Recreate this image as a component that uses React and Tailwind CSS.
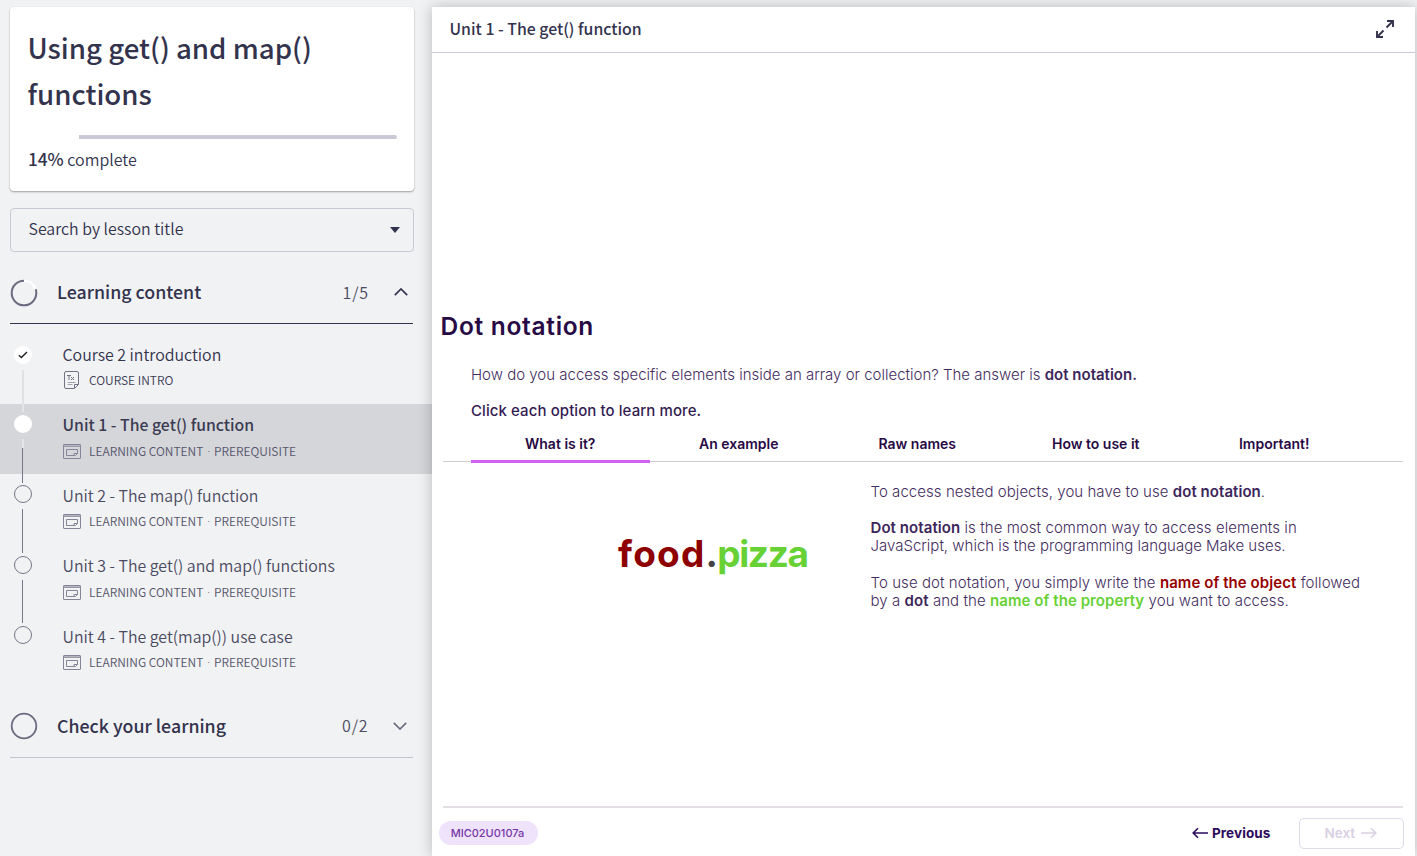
import React from "react";

function Dot() {
  return <span className="mx-[3.8px] font-['Roboto',sans-serif]">·</span>;
}

function ContentIcon() {
  return (
    <svg width="18" height="15" viewBox="0 0 18 15" fill="none" stroke="#85859a" className="shrink-0">
      <rect x="0.5" y="0.5" width="17" height="14" rx="0.5" />
      <path d="M1 1.5H17" stroke="#b4b4c0" />
      <path d="M0.5 2.5H17.5" stroke="#9a9aaa" />
      <path d="M11.5 11.5H3.5V5.5H14.5V9.5L12.5 11.5H11V9.5H14.5" />
    </svg>
  );
}

function TextIcon() {
  return (
    <svg width="18" height="18" viewBox="0 0 18 18" fill="none" stroke="#737385" className="shrink-0">
      <path d="M3 0.5H14Q15.5 0.5 15.5 2V13.5L11.5 17.5H3Q1.5 17.5 1.5 16V2Q1.5 0.5 3 0.5Z" />
      <path d="M11.5 17V13.5H15.5" />
      <path d="M4 4.5H8M6 4.5V9M8 6L11 9M11 6L8 9" />
      <path d="M4.5 11.5H12.5M4.5 13.5H9.5" stroke="#a3a3b0" />
    </svg>
  );
}

function Marker({ state }) {
  if (state === "done")
    return (
      <span className="flex size-[18px] shrink-0 items-center justify-center rounded-full bg-white">
        <svg width="10" height="8" viewBox="0 0 10 8" fill="none" stroke="#222" strokeWidth="1.4">
          <path d="M0.8 4.2L3.4 6.6L9 1" />
        </svg>
      </span>
    );
  if (state === "current") return <span className="size-[18px] shrink-0 rounded-full bg-white" />;
  return <span className="size-[18px] shrink-0 rounded-full border border-[#77778a]" />;
}

function Lesson({ title, kind, state, first, last }) {
  const active = state === "current";
  return (
    <li className={active ? "flex h-[70.4px] bg-[#d5d6da] pl-[13.5px]" : "flex h-[70.4px] pl-[13.5px]"}>
      <div className="flex w-[18px] flex-col items-center">
        <span
          className={
            first
              ? "h-[9px] w-px shrink-0"
              : active
                ? "h-[8.5px] w-[2px] shrink-0 bg-[#e4e5e8]"
                : "h-[8.5px] w-px shrink-0 bg-[#77778a]"
          }
        />
        <span className={first ? "h-[3.4px] shrink-0" : "h-[2.5px] shrink-0"} />
        <Marker state={state} />
        <span className="h-[6px] shrink-0" />
        {active && <span className="h-[9px] w-[2px] shrink-0 bg-[#e4e5e8]" />}
        {!last && <span className={first ? "w-[2px] flex-1 bg-[#e0e1e4]" : "w-px flex-1 bg-[#77778a]"} />}
      </div>
      <div className={first ? "pt-[11px] pl-[31px]" : "pt-[10.7px] pl-[31px]"}>
        <div
          className={
            active
              ? "h-[22px] text-[15.8px] leading-[22px] font-medium whitespace-nowrap text-[#3b3b52]"
              : first
                ? "h-[22px] text-[15.9px] leading-[22px] font-[350] whitespace-nowrap text-[#33334d]"
                : "h-[22px] text-[15.9px] leading-[22px] font-[350] whitespace-nowrap text-[#4a4a60]"
          }
        >
          {title}
        </div>
        <div
          className={
            first
              ? "mt-[5px] flex h-[18px] items-center gap-[8.5px] text-[#3c3c54]"
              : "mt-[5.8px] flex h-[18px] items-center gap-[8.5px] text-[#55556a]"
          }
        >
          {first ? <TextIcon /> : <ContentIcon />}
          <span className="text-[12px] leading-[18px] font-[350] whitespace-nowrap">
            {kind}
            {!first && (
              <>
                <Dot />
                PREREQUISITE
              </>
            )}
          </span>
        </div>
      </div>
    </li>
  );
}

function Chevron({ up, color }) {
  return (
    <svg width="14" height="8" viewBox="0 0 14 8" fill="none" stroke={color} strokeWidth="1.7">
      <path d={up ? "M0.8 7.2L7 1L13.2 7.2" : "M0.8 0.8L7 7L13.2 0.8"} />
    </svg>
  );
}

const tabs = ["What is it?", "An example", "Raw names", "How to use it", "Important!"];

function Sidebar() {
  return (
    <aside className="flex w-[432px] shrink-0 flex-col pt-[7px] font-['Noto_Sans_CJK_SC','Noto_Sans',sans-serif] text-[#33334d]">
      <section className="mx-[10px] h-[184px] w-[404px] rounded-[4px] bg-white px-[18px] pt-[17px] shadow-[0_1px_2px_rgba(0,0,0,0.35)]">
        <h1 className="-ml-[0.5px] text-[27.65px] leading-[46px] font-medium">
          Using get() and map()
          <br />
          functions
        </h1>
        <div className="mt-[19px] flex h-1 w-[369px] justify-end overflow-hidden rounded-sm">
          <div className="w-[318px] bg-[#c9cad6]" />
        </div>
        <p className="mt-[9px] text-[16px] leading-[22px] font-[350]">
          <span className="text-[17.2px] font-medium">14%</span> complete
        </p>
      </section>

      <div className="mx-[10px] mt-[17px] flex h-[44px] w-[404px] items-center justify-between rounded-[4px] border border-[#c9cad6] pr-[13px] pl-[17.5px]">
        <span className="pb-[2px] text-[15.9px] leading-[22px] font-[350]">Search by lesson title</span>
        <svg width="10" height="6" viewBox="0 0 10 6" fill="#33334d">
          <path d="M0 0H10L5 6Z" />
        </svg>
      </div>

      <div className="mx-[10px] flex h-[72px] w-[403px] items-center border-b border-[#33334d] pt-[10px]">
        <svg width="28" height="28" viewBox="0 0 28 28" fill="none" strokeWidth="2">
          <circle cx="14" cy="14" r="12.3" stroke="#6b6b80" />
          <path d="M14 1.7A12.3 12.3 0 0 1 25.7 10.2" stroke="#fff" strokeWidth="3" />
        </svg>
        <h2 className="ml-[19px] pb-[3px] text-[17.8px] leading-6 font-medium">Learning content</h2>
        <span className="ml-auto pb-[2px] text-[16px] leading-6 font-[350] tracking-[0.9px] text-[#4a4a60]">1/5</span>
        <span className="mr-[5.5px] ml-[24.5px] pb-[1px]">
          <Chevron up color="#33334d" />
        </span>
      </div>

      <ul className="pt-[9.4px]">
        <Lesson title="Course 2 introduction" kind="COURSE INTRO" state="done" first />
        <Lesson title="Unit 1 - The get() function" kind="LEARNING CONTENT" state="current" />
        <Lesson title="Unit 2 - The map() function" kind="LEARNING CONTENT" state="todo" />
        <Lesson title="Unit 3 - The get() and map() functions" kind="LEARNING CONTENT" state="todo" />
        <Lesson title="Unit 4 - The get(map()) use case" kind="LEARNING CONTENT" state="todo" last />
      </ul>

      <div className="mx-[10px] flex h-[72.6px] w-[403px] items-center border-b border-[#c3c4cf] pt-[10px]">
        <svg width="28" height="28" viewBox="0 0 28 28" fill="none">
          <circle cx="14" cy="14" r="12.3" stroke="#6b6b80" strokeWidth="1.8" />
        </svg>
        <h2 className="ml-[19px] pb-[2px] text-[17.8px] leading-6 font-medium">Check your learning</h2>
        <span className="ml-auto pb-[2px] text-[16px] leading-6 font-[350] tracking-[0.9px] text-[#4a4a60]">0/2</span>
        <span className="mr-[6px] ml-[24.5px]">
          <Chevron color="#6b6b80" />
        </span>
      </div>
    </aside>
  );
}

function Lead({ children }) {
  return <span className="font-semibold text-[#3c255a]">{children}</span>;
}

export default function App() {
  return (
    <div className="flex h-[856px] w-[1417px] overflow-hidden bg-[#f1f2f4]">
      <Sidebar />
      <main className="relative mt-[7px] flex w-[983px] shrink-0 flex-col bg-white font-['Inter',sans-serif] text-[#432c5e] shadow-[0_0_14px_rgba(0,0,0,0.24)]">
        <header className="flex h-[46px] items-center justify-between border-b border-[#c9cad6] pr-[21.5px] pl-[17.5px] font-['Noto_Sans_CJK_SC','Noto_Sans',sans-serif]">
          <span className="pb-[2px] text-[15.85px] leading-[22px] font-medium text-[#33334d]">
            Unit 1 - The get() function
          </span>
          <svg width="18" height="18" viewBox="0 0 18 18" fill="none" stroke="#33334d" strokeWidth="1.9" className="mb-[2px]">
            <path d="M11 1H17V7M17 1L10.5 7.5M7 17H1V11M1 17L7.5 10.5" />
          </svg>
        </header>

        <div className="flex h-[753px] flex-col pr-[12px] pl-[11px]">
          <h2 className="-ml-[2.5px] pt-[257px] text-[24.5px] leading-8 font-semibold tracking-[0.7px] text-[#280a45]">
            Dot notation
          </h2>
          <div className="pt-[24px] pl-[28px] text-[15px] leading-[18px] font-light">
            <p className="whitespace-nowrap">
              How do you access specific elements inside an array or collection? The answer is{" "}
              <Lead>dot notation.</Lead>
            </p>
            <p className="pt-[18px] font-medium tracking-[0.08px] text-[#341c52]">Click each option to learn more.</p>
          </div>
          <nav className="mt-[5px] flex h-[37px] shrink-0 border-b border-[#cfcbd2] pl-[28px]">
            {tabs.map((t, i) => (
              <span
                key={t}
                className={
                  i === 0
                    ? "-mb-[2px] flex h-[38px] w-[178.5px] items-center justify-center border-b-[3px] border-[#d262f5] pt-[1px] text-[14px] font-semibold text-[#280a45]"
                    : "flex h-[35px] w-[178.5px] items-center justify-center pt-[1px] text-[14px] font-semibold text-[#280a45]"
                }
              >
                {t}
              </span>
            ))}
          </nav>
          <div className="flex pt-[20.6px]">
            <div className="w-[427.5px] pt-[46.4px] pl-[175px] text-[37px] leading-[50px] font-bold whitespace-nowrap">
              <span className="tracking-[1.2px] text-[#8e0000]">food</span>
              <span className="tracking-[-0.5px] text-[#444]">.</span>
              <span className="tracking-[-1.4px] text-[#67d136]">pizza</span>
            </div>
            <div className="text-[15px] leading-[18.2px] font-light tracking-[0.03px] whitespace-nowrap">
              <p className="tracking-[0.05px]">
                To access nested objects, you have to use <Lead>dot notation</Lead>.
              </p>
              <p className="pt-[18.2px]">
                <span className="tracking-[0.07px]">
                  <Lead>Dot notation</Lead> is the most common way to access elements in
                </span>
                <br />
                <span className="tracking-[0px]">JavaScript, which is the programming language Make uses.</span>
              </p>
              <p className="pt-[18.4px] tracking-[0.07px]">
                To use dot notation, you simply write the{" "}
                <span className="font-semibold text-[#960000]">name of the object</span> followed
                <br />
                by a <Lead>dot</Lead> and the <span className="font-semibold text-[#67d136]">name of the property</span> you
                want to access.
              </p>
            </div>
          </div>
        </div>

        <footer className="mr-[12px] ml-[11px] flex h-[50px] items-center border-t-2 border-[#e3dfe5] pt-[2px]">
          <span className="-ml-[4px] flex h-[24px] w-[99px] items-center justify-center rounded-full bg-[#efe2fb] pr-[2px] text-[11px] font-medium text-[#7636a8]">
            MIC02U0107a
          </span>
          <span className="ml-auto flex items-center gap-[3px] text-[13.5px] font-bold tracking-[0.1px] text-[#2d0a5c]">
            <svg width="17" height="12" viewBox="0 0 17 12" fill="none" stroke="#2d0a5c" strokeWidth="1.6">
              <path d="M6 1.2L1.2 6L6 10.8M1.2 6H16" />
            </svg>
            Previous
          </span>
          <span className="-mr-[1px] ml-[28px] flex h-[31px] w-[105.5px] items-center justify-center gap-[5px] rounded-[5px] border-[1.5px] border-[#e0d9ea] pr-[1px] text-[13.5px] font-semibold text-[#d9d0e3]">
            Next
            <svg width="17" height="12" viewBox="0 0 17 12" fill="none" stroke="#d9d0e3" strokeWidth="1.6">
              <path d="M11 1.2L15.8 6L11 10.8M15.8 6H1" />
            </svg>
          </span>
        </footer>
      </main>
    </div>
  );
}
